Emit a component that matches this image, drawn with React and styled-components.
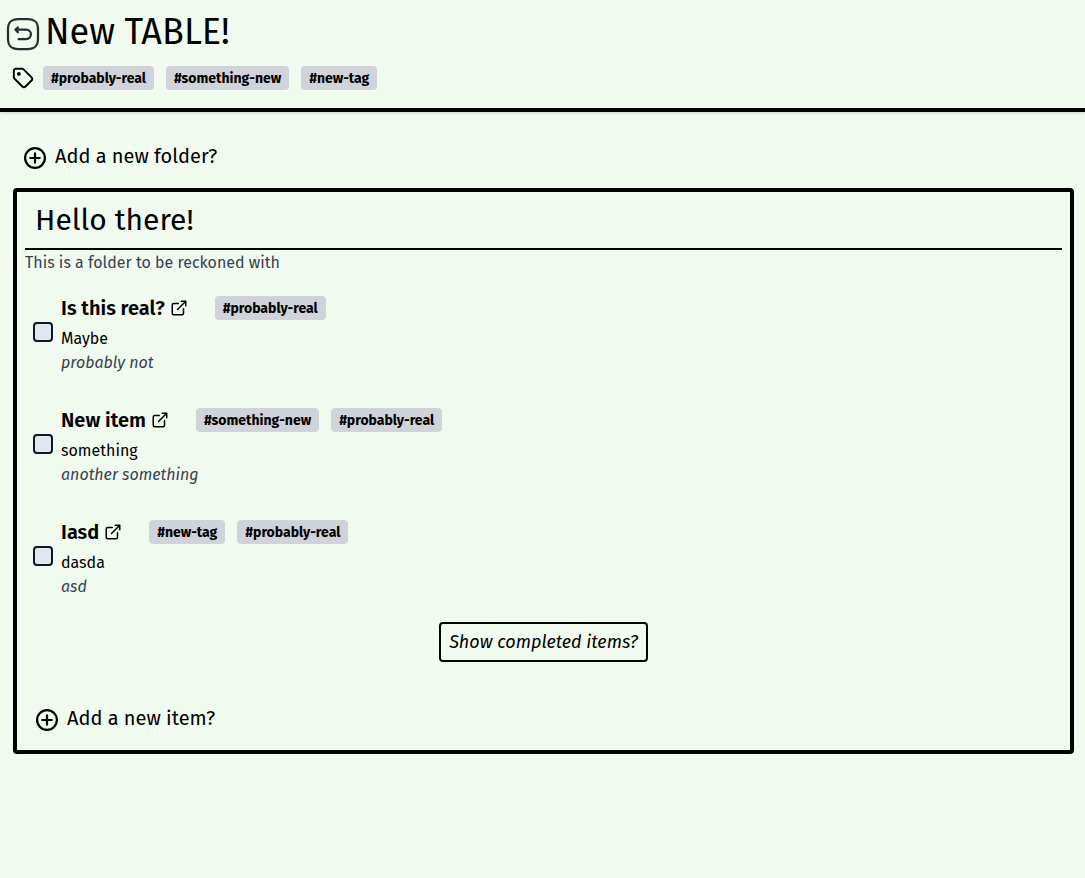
import React from 'react';
import styled, { createGlobalStyle } from 'styled-components';

const GlobalStyle = createGlobalStyle`
  * { box-sizing: border-box; }
  body {
    margin: 0;
    background: #f0faef;
    color: #000;
    font-family: 'Fira Sans', 'Noto Sans', sans-serif;
    font-size: 16px;
    line-height: 24px;
  }
  svg { display: block; flex: none; }
`;

const Header = styled.header`
  height: 112px;
  border-bottom: 4px solid #000;
  box-shadow: 0 1px 3px rgba(0, 0, 0, 0.15);
`;

const TitleRow = styled.div`
  display: flex;
  align-items: flex-start;
  gap: 4px;
  height: 66px;
  padding: 12px 5px 0;
`;

const BackButton = styled.button`
  margin: 4px 0 0;
  padding: 0;
  border: 0;
  background: none;
  color: #292d32;
`;

const Title = styled.h1`
  margin: 0;
  font-size: 36px;
  font-weight: 400;
  line-height: 41px;
`;

const TagRow = styled.div`
  display: flex;
  align-items: center;
  padding-left: 12px;
`;

const TagList = styled.div`
  display: flex;
  gap: 12px;
  margin-left: ${(p) => p.$offset}px;
`;

const Tag = styled.span`
  height: 24px;
  padding: 1px 8px 0;
  border-radius: 4px;
  background: #d1d3db;
  font-size: 14px;
  font-weight: 700;
  line-height: 23px;
`;

const Main = styled.main`
  padding: 30px 11px 0 13px;
`;

const AddButton = styled.button`
  display: flex;
  align-items: center;
  gap: 8px;
  height: 28px;
  margin: 0 0 0 10px;
  padding: 0;
  border: 0;
  background: none;
  color: inherit;
  font: inherit;
  font-size: 20px;
  line-height: 28px;

  svg { margin-top: 4px; }
`;

const Folder = styled.section`
  height: 566px;
  margin-top: 18px;
  padding: 8px;
  border: 4px solid #000;
  border-radius: 4px;
`;

const FolderTitle = styled.h2`
  height: 50px;
  margin: 0;
  padding: 2px 10px 0;
  border-bottom: 2px solid #000;
  font-size: 30px;
  font-weight: 400;
  line-height: 36px;
`;

const Description = styled.p`
  margin: 1px 0 0;
  color: #374151;
`;

const Items = styled.ul`
  display: flex;
  flex-direction: column;
  gap: 32px;
  margin: 19px 0 0;
  padding: 0 8px;
  list-style: none;
`;

const Item = styled.li`
  display: flex;
  align-items: flex-start;
  gap: 8px;
  height: 80px;
`;

const Checkbox = styled.input`
  appearance: none;
  width: 20px;
  height: 20px;
  margin: 28px 0 0;
  border: 2px solid #0f172a;
  border-radius: 4px;
  background: #e2e8f0;
`;

const ItemTop = styled.div`
  display: flex;
  align-items: center;
  height: 28px;
  margin-bottom: 5px;
`;

const ItemTitle = styled.h3`
  margin: 0 5px 0 0;
  font-size: 20px;
  font-weight: 600;
  line-height: 28px;
`;

const Line = styled.p`
  margin: 0;
`;

const Note = styled(Line)`
  color: #374151;
  font-style: italic;
`;

const ShowButton = styled.button`
  display: block;
  height: 40px;
  margin: 24px auto 42px;
  padding: 0 8px;
  border: 2px solid #000;
  border-radius: 4px;
  background: none;
  color: inherit;
  font: inherit;
  font-size: 18px;
  font-style: italic;
  line-height: 28px;
`;

const stroke = {
  fill: 'none',
  stroke: 'currentColor',
  strokeLinecap: 'round',
  strokeLinejoin: 'round',
};

const UndoIcon = () => (
  <svg width="36" height="36" viewBox="0 0 24 24" strokeWidth="1.5" {...stroke}>
    <path d="M9 22h6c5 0 7-2 7-7V9c0-5-2-7-7-7H9C4 2 2 4 2 9v6c0 5 2 7 7 7z" />
    <path d="M9.08 15.38h5.06a3.15 3.15 0 0 0 0-6.3H7.14" />
    <path d="M8.57 10.77 7 9.19l1.57-1.57" />
  </svg>
);

const TagIcon = () => (
  <svg width="22" height="22" viewBox="0 0 24 24" strokeWidth="2.1" {...stroke}>
    <path d="M12.586 2.586A2 2 0 0 0 11.172 2H4a2 2 0 0 0-2 2v7.172a2 2 0 0 0 .586 1.414l8.704 8.704a2.426 2.426 0 0 0 3.42 0l6.58-6.58a2.426 2.426 0 0 0 0-3.42z" />
    <circle cx="7.5" cy="7.5" r="1" fill="currentColor" />
  </svg>
);

const PlusIcon = () => (
  <svg width="24" height="24" viewBox="0 0 24 24" strokeWidth="2.2" {...stroke}>
    <circle cx="12" cy="12" r="9.9" />
    <path d="M12 7.3v9.4M7.3 12h9.4" />
  </svg>
);

const LinkIcon = () => (
  <svg width="18" height="18" viewBox="0 0 24 24" strokeWidth="2" {...stroke}>
    <path d="M11 6H5a2 2 0 0 0-2 2v11a2 2 0 0 0 2 2h11a2 2 0 0 0 2-2v-6M10 14 21 3M15 3h6v6" />
  </svg>
);

const items = [
  { title: 'Is this real?', text: 'Maybe', note: 'probably not', tags: ['#probably-real'] },
  { title: 'New item', text: 'something', note: 'another something', tags: ['#something-new', '#probably-real'] },
  { title: 'Iasd', text: 'dasda', note: 'asd', tags: ['#new-tag', '#probably-real'] },
];

const Tags = ({ tags, offset }) => (
  <TagList $offset={offset}>
    {tags.map((tag) => <Tag key={tag}>{tag}</Tag>)}
  </TagList>
);

export default function App() {
  return (
    <>
      <GlobalStyle />
      <Header>
        <TitleRow>
          <BackButton aria-label="Back"><UndoIcon /></BackButton>
          <Title>New TABLE!</Title>
        </TitleRow>
        <TagRow>
          <TagIcon />
          <Tags tags={['#probably-real', '#something-new', '#new-tag']} offset={9} />
        </TagRow>
      </Header>
      <Main>
        <AddButton><PlusIcon />Add a new folder?</AddButton>
        <Folder>
          <FolderTitle>Hello there!</FolderTitle>
          <Description>This is a folder to be reckoned with</Description>
          <Items>
            {items.map((item) => (
              <Item key={item.title}>
                <Checkbox type="checkbox" aria-label={item.title} />
                <div>
                  <ItemTop>
                    <ItemTitle>{item.title}</ItemTitle>
                    <LinkIcon />
                    <Tags tags={item.tags} offset={27} />
                  </ItemTop>
                  <Line>{item.text}</Line>
                  <Note>{item.note}</Note>
                </div>
              </Item>
            ))}
          </Items>
          <ShowButton>Show completed items?</ShowButton>
          <AddButton><PlusIcon />Add a new item?</AddButton>
        </Folder>
      </Main>
    </>
  );
}
